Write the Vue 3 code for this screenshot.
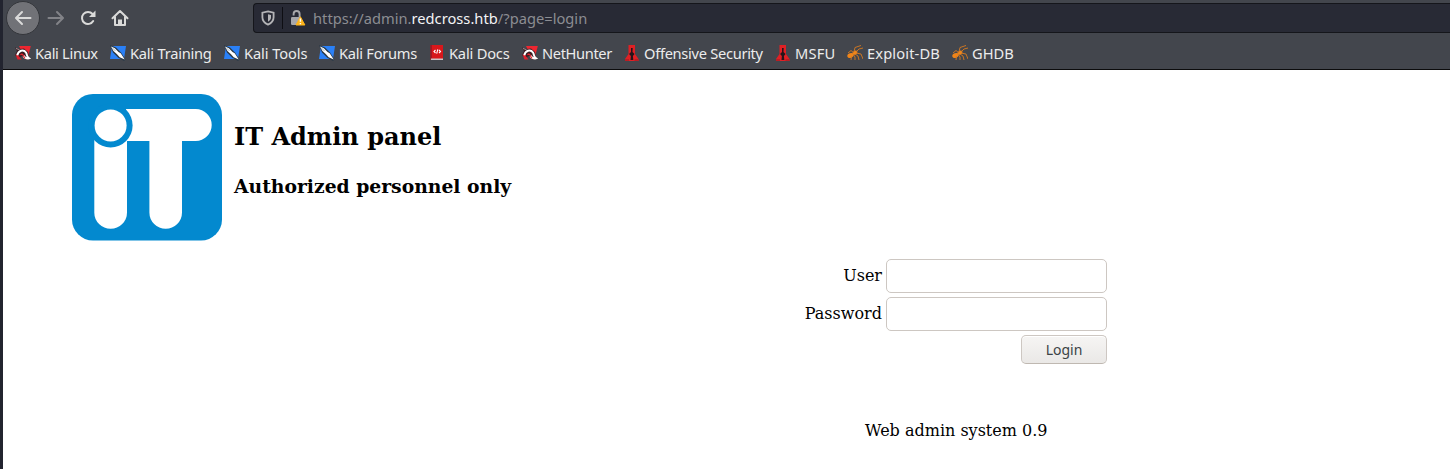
<script setup>
const bookmarks = [
  { label: 'Kali Linux', icon: 'dragon', width: 95, tracking: -0.32 },
  { label: 'Kali Training', icon: 'knife', width: 114, tracking: -0.24 },
  { label: 'Kali Tools', icon: 'knife', width: 95, tracking: -0.1 },
  { label: 'Kali Forums', icon: 'knife', width: 110, tracking: -0.27 },
  { label: 'Kali Docs', icon: 'book', width: 93, tracking: -0.2 },
  { label: 'NetHunter', icon: 'dragon', width: 102, tracking: -0.38 },
  { label: 'Offensive Security', icon: 'tower', width: 151, tracking: -0.3 },
  { label: 'MSFU', icon: 'tower', width: 72, tracking: 0.2 },
  { label: 'Exploit-DB', icon: 'bug', width: 105, tracking: 0.14 },
  { label: 'GHDB', icon: 'bug', width: 70, tracking: 0 },
]
</script>

<template>
  <div class="window">
    <header class="chrome">
      <nav class="toolbar">
        <button class="nav back" aria-label="Back">
          <svg width="18" height="18" viewBox="0 0 18 18"><path d="M16.500 9H2.5M8 3 2 9l6 6" /></svg>
        </button>
        <button class="nav forward" aria-label="Forward">
          <svg width="18" height="18" viewBox="0 0 18 18"><path d="M1.5 9h14M10 3l6 6-6 6" /></svg>
        </button>
        <button class="nav reload" aria-label="Reload">
          <svg width="18" height="18" viewBox="0 0 18 18">
            <path d="M14.2 12A6 6 0 1 1 13.5 5l1.2 1.5" />
            <path class="solid" d="M16.500 1.500v6.500h-6.500z" />
          </svg>
        </button>
        <button class="nav home" aria-label="Home">
          <svg width="18" height="18" viewBox="0 0 18 18">
            <path d="M1.5 9.3 9 2l7.500 7.300M4 8v8h10V8" />
            <path class="solid" d="M7 16v-5.500h4V16z" />
          </svg>
        </button>
        <div class="address">
          <svg class="shield" width="14" height="16" viewBox="0 0 14 16">
            <path d="M7 1.400 12.600 2.700v4.500c0 3.800-2.300 5.900-5.600 7.400-3.300-1.500-5.600-3.600-5.600-7.400V2.700z" fill="none" stroke="#b4b4b7" stroke-width="1.800" />
            <path d="M7 4.200v7.500c2-1.200 3-2.500 3-4.500V5z" fill="#b4b4b7" />
          </svg>
          <span class="divider"></span>
          <svg class="lock" width="16" height="16" viewBox="0 0 16 16">
            <path d="M3.600 5.500V4a3 3 0 0 1 6 0v3.500" fill="none" stroke="#a8a8ab" stroke-width="1.900" />
            <rect x="1" y="7" width="9" height="8" rx="1.200" fill="#a8a8ab" />
            <path d="M10.400 6.800 14.900 15H6z" fill="#ffb51b" stroke="#ffb51b" stroke-linejoin="round" />
            <path d="M10.400 8.500v3.200M10.400 13v1.300" stroke="#fff" stroke-width="1.400" />
          </svg>
          <span class="url">https://admin.<b>redcross.htb</b>/?page=login</span>
        </div>
      </nav>

      <nav class="bookmarks">
        <a v-for="(mark, i) in bookmarks" :key="i" class="bookmark" :style="{ width: mark.width + 'px', letterSpacing: mark.tracking + 'px' }">
          <svg width="16" height="16" viewBox="0 0 16 16">
            <g v-if="mark.icon === 'dragon'">
              <path d="M4 1h11.800L13 12 8 9z" fill="#ed2630" />
              <path d="M0 2.500 5 4l4-.5 4 3.500 1 5 2 2-5 1-4-4-4 2-3-3 2-4z" fill="#3b1a20" />
              <path d="M.5 9.500 3 10l3.500 4.500H2.500z" fill="#e01f2c" />
              <path d="M2.300 10.300C3.200 5.500 8.500 4 11 7.500c1.300 2.200.3 3.700 3 5.800-3.500.8-4.500-.5-5.500-2.500" fill="none" stroke="#fff" stroke-width="2" />
              <path d="M5.500 10c1.500-2 2.500-.5 3 1l1.500 2.500" fill="none" stroke="#ed2630" stroke-width="1.200" />
              <path d="m1 3.500 3.500 1.200" stroke="#c0b3b5" stroke-width=".8" />
            </g>
            <g v-else-if="mark.icon === 'knife'">
              <path d="M2 1h14l-2 13H0z" fill="#2a80f7" />
              <path d="m0 0 6 2.500 5 5 4.500 7L14 16l-6-3.500-5-5z" fill="#2b3a48" />
              <path d="m1 1.500 3.800 1.700L8.500 7l2.200 1.300 4 6.200-5-2.200L7 9.200 3.500 6z" fill="#fff" />
              <path d="m2.500 3 3 3" stroke="#8496a5" stroke-width=".7" />
            </g>
            <g v-else-if="mark.icon === 'book'">
              <path d="M1.500 0H14v15H1.500z" fill="#d8171b" />
              <path d="M1.500 0h1.200v14H1.500z" fill="#8c1626" />
              <path d="M2 13.500h12V15H2z" fill="#ccc3c5" />
              <path d="M6.500 5 5 6.500 6.500 8M10 5l1.500 1.500L10 8M8.800 4.400 7.700 8.600" fill="none" stroke="#fff" stroke-width="1.100" />
            </g>
            <g v-else-if="mark.icon === 'tower'">
              <path d="M4.500 0H11v9l3.500 5v2H1v-2l3.500-5z" fill="#df2024" />
              <path d="M7 3h1.700l-.2 4 2 2-1.600 2 .4 4H6.500l.4-4-1.800-2 1.900-2z" fill="#24151a" />
              <path d="M1 14h4v2H1zm9.500 0h4v2h-4z" fill="#b91d24" />
            </g>
            <g v-else>
              <ellipse cx="3.500" cy="10.500" rx="3.300" ry="2.300" transform="rotate(-22 3.500 10.500)" fill="#ef8419" />
              <ellipse cx="8" cy="7.700" rx="2.600" ry="1.900" transform="rotate(-25 8 7.700)" fill="#f0861a" />
              <path d="M7 8 4 5.500 1 8m6-1 1-4.500 6-2M9 7l3-3 4-1M9 8l5 1 2 5M8 9l3 2 1 4M6 9l2 3v3M4.500 11l-.5 4" fill="none" stroke="#d77b20" stroke-width=".9" />
            </g>
          </svg>
          <span>{{ mark.label }}</span>
        </a>
      </nav>
    </header>

    <main>
      <section class="banner">
        <svg class="logo" width="150" height="147" viewBox="0 0 150 147">
          <rect width="150" height="146.500" rx="21" fill="#0389cf" />
          <path d="M54 15h69.700a16 16 0 0 1 0 32H110v71.500a16.300 16.300 0 0 1-32.600 0V47H54z" fill="#fff" />
          <path d="M22.300 45H55v73.500a16.350 16.350 0 0 1-32.700 0z" fill="#fff" />
          <circle cx="38.600" cy="31.400" r="22" fill="#0389cf" />
          <circle cx="38.600" cy="31.400" r="16" fill="#fff" />
        </svg>
        <div class="titles">
          <h1>IT Admin panel</h1>
          <h2>Authorized personnel only</h2>
        </div>
      </section>
      <form class="login" @submit.prevent>
        <label for="user">User</label>
        <input id="user" type="text" />
        <label for="password">Password</label>
        <input id="password" type="password" />
        <button type="submit">Login</button>
      </form>
      <footer>Web admin system 0.9</footer>
    </main>
  </div>
</template>

<style>
body { margin: 0; background: #fff; }
</style>

<style scoped>
* { box-sizing: border-box; }
.window {
  height: 469px;
  overflow: hidden;
  border-left: 3px solid #22242f;
  background: #fff;
}
.chrome {
  height: 70px;
  background: #43464d;
  border-bottom: 1px solid #0c0c0d;
  font-family: "Noto Sans", sans-serif;
  font-size: 14.67px;
}
.toolbar { display: flex; height: 36px; align-items: center; padding-left: 3px; }
.nav {
  display: flex;
  align-items: center;
  justify-content: center;
  width: 32px;
  height: 32px;
  padding: 0;
  border: 0;
  background: none;
}
.nav svg { fill: none; stroke: #dadad9; stroke-width: 2; stroke-linecap: round; stroke-linejoin: round; }
.nav .solid { fill: #dadad9; stroke: none; }
.back { width: 34px; height: 34px; border: 1px solid #34363b; border-radius: 50%; background: #717277; }
.forward svg { stroke: #828388; }
.address {
  display: flex;
  align-items: center;
  flex: 1;
  height: 30px;
  margin-left: 117px;
  padding-left: 7px;
  border: 1px solid #15161b;
  border-right: 0;
  border-radius: 4px 0 0 4px;
  background: #282a35;
}
.divider { width: 1px; height: 22px; margin-left: 7px; background: #0e0e13; }
.lock { margin-left: 7px; }
.url { margin-left: 7px; color: #8c8d92; white-space: nowrap; letter-spacing: 0.02px; }
.url b { color: #f4f4f5; font-weight: 400; }
.bookmarks { display: flex; height: 33px; align-items: center; padding-left: 12px; color: #ececec; }
.bookmark { display: flex; flex: none; align-items: center; gap: 4px; white-space: nowrap; }
.bookmark svg { flex: none; }
main { font-family: "DejaVu Serif", serif; font-size: 16px; color: #000; }
.banner { display: flex; padding: 24px 0 0 69px; gap: 12px; }
.logo { flex: none; }
.titles { padding-top: 29px; }
h1 { margin: 0; font-size: 24px; line-height: 28px; }
h2 { margin: 24px 0 0; font-size: 18.750px; line-height: 22px; }
.login {
  display: grid;
  grid-template-columns: 879px 221px;
  grid-template-rows: 34px 34px 29px;
  gap: 4px;
  margin-top: 18px;
  align-items: center;
}
label { text-align: right; line-height: 20px; }
input {
  width: 221px;
  height: 34px;
  border: 1px solid #cdc7c2;
  border-radius: 5px;
  background: #fff;
}
.login button {
  grid-column: 2;
  justify-self: end;
  width: 86px;
  height: 29px;
  padding: 0;
  border: 1px solid #cdc7c2;
  border-bottom-color: #bfb8b1;
  border-radius: 5px;
  background: linear-gradient(#f6f5f4, #eae8e6);
  box-shadow: inset 0 1px #fff;
  color: #3b4346;
  font: 14px "Noto Sans", sans-serif;
}
footer { margin: 57px 0 0 862px; line-height: 20px; }
</style>
